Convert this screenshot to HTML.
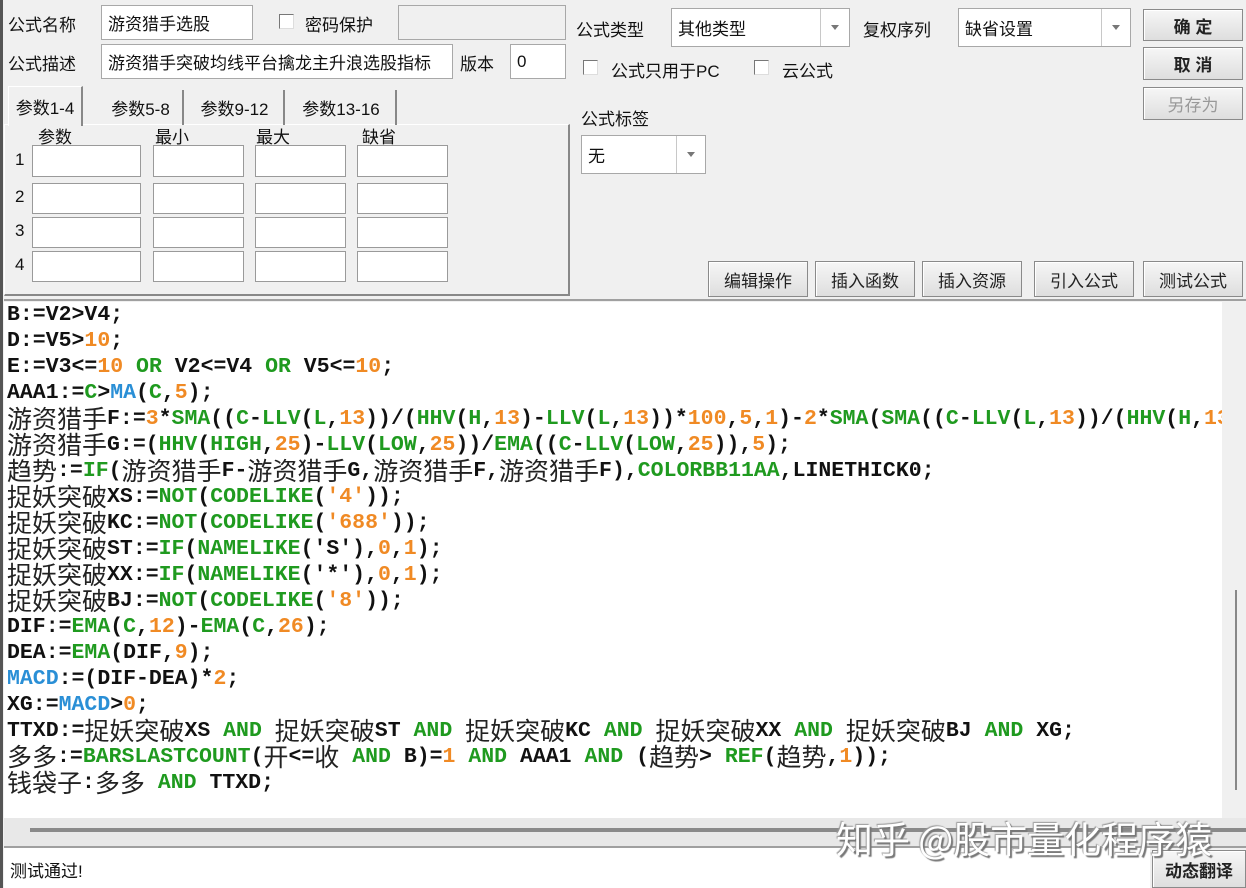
<!DOCTYPE html>
<html><head><meta charset="utf-8"><style>
*{margin:0;padding:0;box-sizing:border-box}
body{width:1246px;height:888px;background:#f0f0f0;position:relative;overflow:hidden;font-family:"Liberation Sans","Noto Sans CJK SC",sans-serif;font-size:17px;color:#111}
.a{position:absolute;white-space:nowrap}
.in{position:absolute;background:#fff;border:1px solid #a8a8a8;font-size:17px;padding:0 6px;display:flex;align-items:center;overflow:hidden;white-space:nowrap}
.cb{position:absolute;width:15px;height:15px;background:#fff;border:1px solid #777;border-right-color:#ddd;border-bottom-color:#ddd}
.cmb{position:absolute;background:#fff;border:1px solid #a8a8a8;font-size:17px;padding-left:6px;display:flex;align-items:center}
.cmb .dd{position:absolute;right:0;top:0;bottom:0;width:29px;border-left:1px solid #c8c8c8}
.cmb .dd:after{content:"";position:absolute;left:10px;top:16px;border:4px solid transparent;border-top:5px solid #777}
.btn{position:absolute;background:linear-gradient(#f6f6f6,#dedede);border:1px solid #8a8a8a;box-shadow:inset 1px 1px 0 #fff;font-size:17px;display:flex;align-items:center;justify-content:center;color:#222}
.tab{position:absolute;top:90px;height:35px;font-size:17px;display:flex;align-items:center;justify-content:center;border-right:2px solid #888}
.pb{position:absolute;background:#fff;border:1px solid #9a9a9a}
#code{position:absolute;left:4px;top:302px;width:1218px;height:516px;background:#fff;overflow:hidden}
.ln{height:26px;line-height:26px;white-space:nowrap;font-family:"Liberation Mono",monospace;font-weight:bold;font-size:21.5px;color:#111;padding-left:3px;overflow:hidden}
.ln i{font-style:normal;font-family:"Noto Sans CJK SC",sans-serif;font-weight:normal;font-size:25px;color:#222;display:inline-block;height:26px;line-height:26px;vertical-align:top;position:relative;top:-1px}
.g{color:#1f9a1f}.o{color:#f08a24}.b{color:#2a8fd6}
</style></head><body>
<div style="position:absolute;left:0;top:0;width:3px;height:888px;background:#555"></div>
<div class="a" style="left:8px;top:11px">公式名称</div>
<div class="in" style="left:101px;top:5px;width:152px;height:35px">游资猎手选股</div>
<div class="cb" style="left:279px;top:14px"></div>
<div class="a" style="left:305px;top:11px">密码保护</div>
<div class="in" style="left:398px;top:5px;width:168px;height:35px;background:#f0f0f0"></div>
<div class="a" style="left:8px;top:50px">公式描述</div>
<div class="in" style="left:101px;top:44px;width:352px;height:35px">游资猎手突破均线平台擒龙主升浪选股指标</div>
<div class="a" style="left:460px;top:50px">版本</div>
<div class="in" style="left:510px;top:44px;width:56px;height:35px">0</div>

<div style="position:absolute;left:4px;top:124px;width:566px;height:172px;border:1px solid #fff;border-right:2px solid #888;border-bottom:2px solid #888"></div>
<div class="tab" style="left:8px;width:75px;top:86px;height:40px;background:#f0f0f0;border-left:1px solid #fff;border-top:1px solid #fff">参数1-4</div>
<div class="tab" style="left:99px;width:85px">参数5-8</div>
<div class="tab" style="left:186px;width:99px">参数9-12</div>
<div class="tab" style="left:287px;width:110px">参数13-16</div>
<div class="a" style="left:38px;top:123px">参数</div>
<div class="a" style="left:155px;top:123px">最小</div>
<div class="a" style="left:256px;top:123px">最大</div>
<div class="a" style="left:362px;top:123px">缺省</div>
<div class="a" style="left:15px;top:150px">1</div>
<div class="a" style="left:15px;top:187px">2</div>
<div class="a" style="left:15px;top:221px">3</div>
<div class="a" style="left:15px;top:255px">4</div>
<div class="pb" style="left:32px;top:145px;width:109px;height:32px"></div><div class="pb" style="left:153px;top:145px;width:91px;height:32px"></div><div class="pb" style="left:255px;top:145px;width:91px;height:32px"></div><div class="pb" style="left:357px;top:145px;width:91px;height:32px"></div>
<div class="pb" style="left:32px;top:183px;width:109px;height:31px"></div><div class="pb" style="left:153px;top:183px;width:91px;height:31px"></div><div class="pb" style="left:255px;top:183px;width:91px;height:31px"></div><div class="pb" style="left:357px;top:183px;width:91px;height:31px"></div>
<div class="pb" style="left:32px;top:217px;width:109px;height:31px"></div><div class="pb" style="left:153px;top:217px;width:91px;height:31px"></div><div class="pb" style="left:255px;top:217px;width:91px;height:31px"></div><div class="pb" style="left:357px;top:217px;width:91px;height:31px"></div>
<div class="pb" style="left:32px;top:251px;width:109px;height:31px"></div><div class="pb" style="left:153px;top:251px;width:91px;height:31px"></div><div class="pb" style="left:255px;top:251px;width:91px;height:31px"></div><div class="pb" style="left:357px;top:251px;width:91px;height:31px"></div>

<div class="a" style="left:576px;top:16px">公式类型</div>
<div class="cmb" style="left:671px;top:8px;width:179px;height:39px">其他类型<span class="dd"></span></div>
<div class="a" style="left:863px;top:16px">复权序列</div>
<div class="cmb" style="left:958px;top:8px;width:173px;height:39px">缺省设置<span class="dd"></span></div>
<div class="cb" style="left:583px;top:60px"></div>
<div class="a" style="left:611px;top:57px">公式只用于PC</div>
<div class="cb" style="left:754px;top:60px"></div>
<div class="a" style="left:782px;top:57px">云公式</div>
<div class="a" style="left:581px;top:105px">公式标签</div>
<div class="cmb" style="left:581px;top:135px;width:125px;height:39px">无<span class="dd"></span></div>
<div class="btn" style="left:1143px;top:9px;width:100px;height:32px;font-weight:bold">确 定</div>
<div class="btn" style="left:1143px;top:47px;width:100px;height:33px;font-weight:bold">取 消</div>
<div class="btn" style="left:1143px;top:87px;width:100px;height:33px;color:#999">另存为</div>
<div class="btn" style="left:708px;top:261px;width:100px;height:36px">编辑操作</div>
<div class="btn" style="left:815px;top:261px;width:100px;height:36px">插入函数</div>
<div class="btn" style="left:922px;top:261px;width:100px;height:36px">插入资源</div>
<div class="btn" style="left:1034px;top:261px;width:100px;height:36px">引入公式</div>
<div class="btn" style="left:1143px;top:261px;width:100px;height:36px">测试公式</div>
<div style="position:absolute;left:4px;top:299px;width:1242px;height:2px;background:#a0a0a0"></div>

<div id="code">
<div class="ln">B:=V2&gt;V4;</div>
<div class="ln">D:=V5&gt;<span class="o">10</span>;</div>
<div class="ln">E:=V3&lt;=<span class="o">10</span> <span class="g">OR</span> V2&lt;=V4 <span class="g">OR</span> V5&lt;=<span class="o">10</span>;</div>
<div class="ln">AAA1:=<span class="g">C</span>&gt;<span class="b">MA</span>(<span class="g">C</span>,<span class="o">5</span>);</div>
<div class="ln"><i>游资猎手</i>F:=<span class="o">3</span>*<span class="g">SMA</span>((<span class="g">C</span>-<span class="g">LLV</span>(<span class="g">L</span>,<span class="o">13</span>))/(<span class="g">HHV</span>(<span class="g">H</span>,<span class="o">13</span>)-<span class="g">LLV</span>(<span class="g">L</span>,<span class="o">13</span>))*<span class="o">100</span>,<span class="o">5</span>,<span class="o">1</span>)-<span class="o">2</span>*<span class="g">SMA</span>(<span class="g">SMA</span>((<span class="g">C</span>-<span class="g">LLV</span>(<span class="g">L</span>,<span class="o">13</span>))/(<span class="g">HHV</span>(<span class="g">H</span>,<span class="o">13</span>)</div>
<div class="ln"><i>游资猎手</i>G:=(<span class="g">HHV</span>(<span class="g">HIGH</span>,<span class="o">25</span>)-<span class="g">LLV</span>(<span class="g">LOW</span>,<span class="o">25</span>))/<span class="g">EMA</span>((<span class="g">C</span>-<span class="g">LLV</span>(<span class="g">LOW</span>,<span class="o">25</span>)),<span class="o">5</span>);</div>
<div class="ln"><i>趋势</i>:=<span class="g">IF</span>(<i>游资猎手</i>F-<i>游资猎手</i>G,<i>游资猎手</i>F,<i>游资猎手</i>F),<span class="g">COLORBB11AA</span>,LINETHICK0;</div>
<div class="ln"><i>捉妖突破</i>XS:=<span class="g">NOT</span>(<span class="g">CODELIKE</span>(<span class="o">'4'</span>));</div>
<div class="ln"><i>捉妖突破</i>KC:=<span class="g">NOT</span>(<span class="g">CODELIKE</span>(<span class="o">'688'</span>));</div>
<div class="ln"><i>捉妖突破</i>ST:=<span class="g">IF</span>(<span class="g">NAMELIKE</span>('S'),<span class="o">0</span>,<span class="o">1</span>);</div>
<div class="ln"><i>捉妖突破</i>XX:=<span class="g">IF</span>(<span class="g">NAMELIKE</span>('*'),<span class="o">0</span>,<span class="o">1</span>);</div>
<div class="ln"><i>捉妖突破</i>BJ:=<span class="g">NOT</span>(<span class="g">CODELIKE</span>(<span class="o">'8'</span>));</div>
<div class="ln">DIF:=<span class="g">EMA</span>(<span class="g">C</span>,<span class="o">12</span>)-<span class="g">EMA</span>(<span class="g">C</span>,<span class="o">26</span>);</div>
<div class="ln">DEA:=<span class="g">EMA</span>(DIF,<span class="o">9</span>);</div>
<div class="ln"><span class="b">MACD</span>:=(DIF-DEA)*<span class="o">2</span>;</div>
<div class="ln">XG:=<span class="b">MACD</span>&gt;<span class="o">0</span>;</div>
<div class="ln">TTXD:=<i>捉妖突破</i>XS <span class="g">AND</span> <i>捉妖突破</i>ST <span class="g">AND</span> <i>捉妖突破</i>KC <span class="g">AND</span> <i>捉妖突破</i>XX <span class="g">AND</span> <i>捉妖突破</i>BJ <span class="g">AND</span> XG;</div>
<div class="ln"><i>多多</i>:=<span class="g">BARSLASTCOUNT</span>(<i>开</i>&lt;=<i>收</i> <span class="g">AND</span> B)=<span class="o">1</span> <span class="g">AND</span> AAA1 <span class="g">AND</span> (<i>趋势</i>&gt; <span class="g">REF</span>(<i>趋势</i>,<span class="o">1</span>));</div>
<div class="ln"><i>钱袋子</i>:<i>多多</i> <span class="g">AND</span> TTXD;</div>
</div>
<div style="position:absolute;left:1235px;top:590px;width:2px;height:200px;background:#888"></div>
<div style="position:absolute;left:4px;top:818px;width:1242px;height:28px;background:#e8e8e8"></div>
<div style="position:absolute;left:30px;top:828px;width:1216px;height:4px;background:#8a8a8a"></div>
<div style="position:absolute;left:4px;top:846px;width:1242px;height:2px;background:#a0a0a0"></div>
<div style="position:absolute;left:4px;top:848px;width:1146px;height:40px;background:#fff"></div>
<div class="a" style="left:10px;top:857px;font-size:17px">测试通过!</div>
<div class="btn" style="left:1152px;top:850px;width:94px;height:38px;font-weight:bold">动态翻译</div>
<div class="a" style="left:836px;top:810px;font-size:37px;color:#fff;text-shadow:2px 2px 1px #777,-1px -1px 1px #999;font-family:'Noto Sans CJK SC',sans-serif">知乎 @股市量化程序猿</div>
</body></html>
